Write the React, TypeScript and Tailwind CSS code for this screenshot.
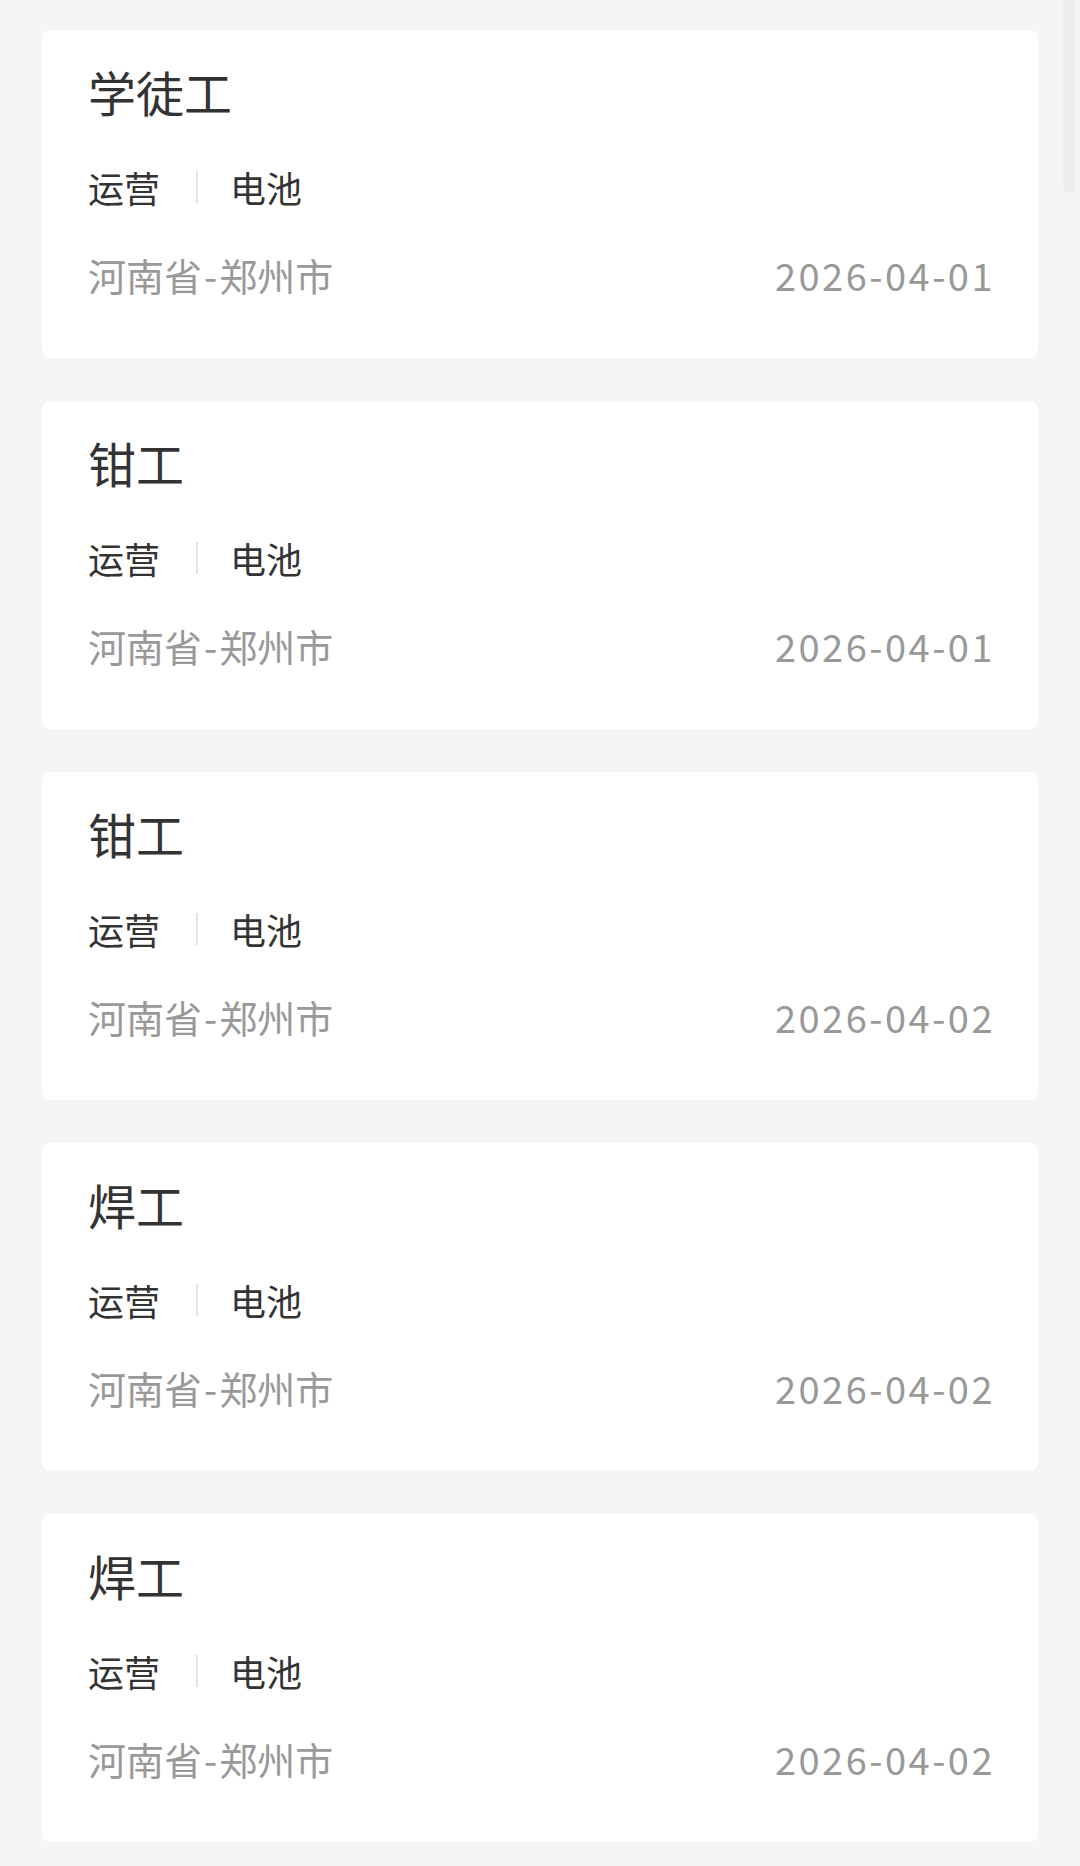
import React from "react";

type Job = { title: string; date: string };

const jobs: Job[] = [
  { title: "学徒工", date: "2026-04-01" },
  { title: "钳工", date: "2026-04-01" },
  { title: "钳工", date: "2026-04-02" },
  { title: "焊工", date: "2026-04-02" },
  { title: "焊工", date: "2026-04-02" },
];

const cjk = { fontFamily: '"Noto Sans CJK SC", "Noto Sans", sans-serif' };

function Card({ job }: { job: Job }) {
  return (
    <div className="flex h-[328px] flex-col rounded-[8px] bg-white pl-[46px] pr-[46px] pt-[37px]">
      <div className="text-[48px] leading-[48px] text-[#333333]">{job.title}</div>
      <div className="mt-[54px] flex items-center text-[36px] leading-[36px] text-[#333333]">
        <span>运营</span>
        <span className="ml-[36px] mr-[32px] h-[32px] w-[2px] bg-[#e2e2e2]" />
        <span>电池</span>
      </div>
      <div className="mt-[51px] flex items-center justify-between text-[38px] leading-[38px] text-[#999999]">
        <span>
          河南省<span className="mx-[2px]">-</span>郑州市
        </span>
        <span className="-mr-[3px] tracking-[2.5px]">{job.date}</span>
      </div>
    </div>
  );
}

export default function App() {
  return (
    <div className="relative min-h-[1866px] w-[1080px] overflow-hidden bg-[#f5f5f5]" style={cjk}>
      <div className="absolute right-[5px] top-0 h-[193px] w-[12px] rounded-b-full bg-[#eeeeee]" />
      <div className="flex flex-col gap-[43px] pl-[42px] pr-[42px] pt-[30px]">
        {jobs.map((j, i) => (
          <Card key={i} job={j} />
        ))}
      </div>
    </div>
  );
}
